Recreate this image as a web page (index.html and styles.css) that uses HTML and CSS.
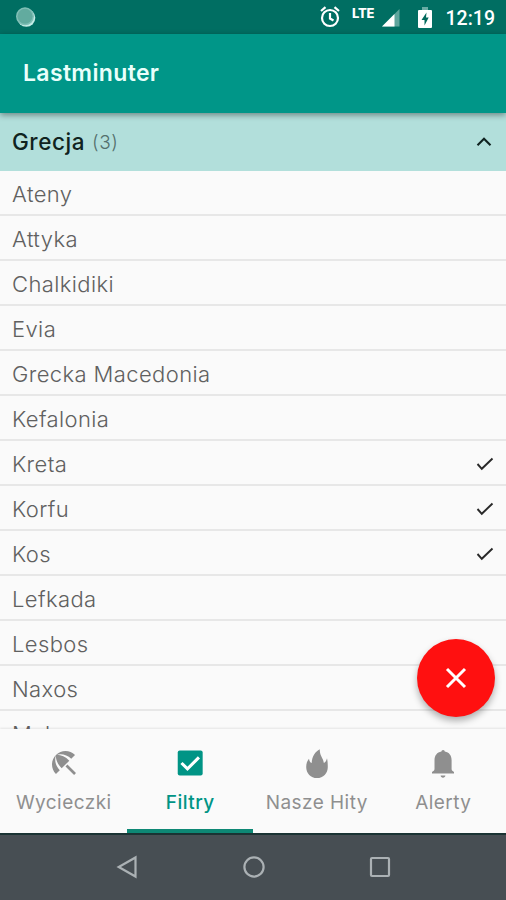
FILE: index.html
```html
<!DOCTYPE html>
<html lang="pl">
<head>
<meta charset="utf-8">
<title>Lastminuter</title>
<link rel="stylesheet" href="styles.css">
</head>
<body>
<div class="app">
  <header class="status">
    <svg class="sync" width="22" height="22" viewBox="0 0 22 22"><circle cx="11.300" cy="11.800" r="9" fill="#c3ece6"/><circle cx="10" cy="10.300" r="9" fill="#80bfb6"/><circle cx="10" cy="10.300" r="7.500" fill="#62ab9f"/></svg>
    <svg class="alarm" width="20" height="22" viewBox="0 0 20 22" fill="none" stroke="#fff" stroke-width="2.200"><circle cx="10" cy="12" r="8"/><path d="M10 7v5.500l3.500 2M1 5l4.500-3.800M19 5l-4.500-3.800"/></svg>
    <span class="lte">LTE</span>
    <svg class="signal" width="19" height="18" viewBox="0 0 19 18"><path d="M0 17.500 17.500 0v17.500z" fill="#5ea59d"/><path d="M0 17.500 12.500 5v12.500z" fill="#fff"/></svg>
    <svg class="battery" width="14" height="22" viewBox="0 0 14 22"><path d="M4 0h6v3H4z" fill="#68aca4"/><path d="M1 3h12a1 1 0 0 1 1 1v16a1 1 0 0 1-1 1H1a1 1 0 0 1-1-1V4a1 1 0 0 1 1-1z" fill="#fff"/><path d="M8.500 5.500 3.500 13h3v5.500l4.200-8H8z" fill="#00695c"/></svg>
    <span class="clock">12:19</span>
  </header>
  <div class="appbar"><h1>Lastminuter</h1></div>
  <main class="list">
    <div class="group"><span class="country">Grecja</span><span class="count">(3)</span>
      <svg class="chevron" width="16" height="10" viewBox="0 0 16 10" fill="none" stroke="#102320" stroke-width="2.100"><path d="M1.500 8.200 8 1.800l6.500 6.400"/></svg>
    </div>
    <div class="row">Ateny</div>
    <div class="row">Attyka</div>
    <div class="row">Chalkidiki</div>
    <div class="row">Evia</div>
    <div class="row">Grecka Macedonia</div>
    <div class="row">Kefalonia</div>
    <div class="row">Kreta<svg class="check" width="18" height="14" viewBox="0 0 18 14"><path d="m1.500 7 4.300 4.800L16.500 1.500"/></svg></div>
    <div class="row">Korfu<svg class="check" width="18" height="14" viewBox="0 0 18 14"><path d="m1.500 7 4.300 4.800L16.500 1.500"/></svg></div>
    <div class="row">Kos<svg class="check" width="18" height="14" viewBox="0 0 18 14"><path d="m1.500 7 4.300 4.800L16.500 1.500"/></svg></div>
    <div class="row">Lefkada</div>
    <div class="row">Lesbos</div>
    <div class="row">Naxos</div>
    <div class="row">Mykonos</div>
    <button class="fab" aria-label="Zamknij"><svg width="22" height="22" viewBox="0 0 22 22"><path d="m2 2 18 18M20 2 2 20" stroke="#fff" stroke-width="3"/></svg></button>
  </main>
  <nav class="tabs">
    <div class="tab">
      <svg width="32" height="32" viewBox="0 0 24 24" fill="#8f8f8f"><path d="m13.127 14.560 1.430-1.430 6.440 6.443L19.570 21zm4.293-5.730 2.860-2.860c-3.950-3.950-10.350-3.960-14.300-.02 3.930-1.300 8.310-.25 11.440 2.880zM5.950 5.980c-3.940 3.950-3.930 10.350.02 14.300l2.860-2.860C5.700 14.290 4.650 9.910 5.950 5.980zm.02-.02-.01.01c-.38 3.010 1.170 6.880 4.300 10.020l5.730-5.730c-3.130-3.130-7.010-4.680-10.020-4.300z"/></svg>
      <span>Wycieczki</span>
    </div>
    <div class="tab active">
      <svg width="32" height="32" viewBox="0 0 24 24"><rect x="2.800" y="2.700" width="18.700" height="18.700" rx="1.500" fill="#009485"/><path d="m5.600 12 4.500 4.400 8.600-8.600" fill="none" stroke="#fff" stroke-width="2.300"/></svg>
      <span>Filtry</span>
    </div>
    <div class="tab">
      <svg width="32" height="32" viewBox="0 0 32 32" fill="#8f8f8f"><path d="M18.800 2.200C14.300 4.400 11 9.200 10.700 16c-1.600-.6-2.400-2.300-2.700-4.300C6.100 14 5.200 16.800 5.200 19.900 5.200 26.200 9.800 31 16 31s10.800-4.800 10.800-11.100c0-3.300-.3-6.500-.8-8.600-.5 2.200-1.500 4-3.100 4.700-.5-5-4.400-7.200-4.100-13.800z"/></svg>
      <span>Nasze Hity</span>
    </div>
    <div class="tab">
      <svg width="32" height="32" viewBox="0 0 32 32" fill="#8f8f8f"><path d="M14.400 4.600a1.700 1.700 0 0 1 3.400 0c4.400.8 6.800 4 6.800 8.700v8.600c0 1.500 1 2.100 2.400 3v1.600H5v-1.600c1.500-.9 2.500-1.500 2.500-3v-8.600c0-4.700 2.500-7.900 6.900-8.700zM13.600 28.500h4.800c-.2 1.400-1 2.200-2.400 2.200s-2.200-.8-2.400-2.200z"/></svg>
      <span>Alerty</span>
    </div>
  </nav>
  <footer class="sysnav">
    <svg width="22" height="24" viewBox="0 0 22 24"><path d="M19.500 2.500v19L2.700 12z"/></svg>
    <svg width="24" height="24" viewBox="0 0 24 24"><circle cx="12" cy="12" r="9.600"/></svg>
    <svg width="22" height="22" viewBox="0 0 22 22"><rect x="2" y="2" width="18" height="18" rx="1"/></svg>
  </footer>
</div>
</body>
</html>
```
FILE: styles.css
```css
* { box-sizing: border-box; }
body { margin: 0; font-family: Inter, "Liberation Sans", sans-serif; background: #fafafa; }
svg { display: block; flex: none; }
.app { width: 506px; height: 900px; display: flex; flex-direction: column; overflow: hidden; }
.status { height: 34px; flex: none; background: #006e62; display: flex; align-items: flex-start; color: #fff; }
.sync { margin: 6px 0 0 15px; }
.alarm { margin: 6px 0 0 283px; }
.lte { margin: 7px 0 0 12px; width: 24px; font: 800 13px/13px Inter, sans-serif; letter-spacing: -.2px; white-space: nowrap; }
.signal { margin: 9px 0 0 6px; }
.battery { margin: 7px 0 0 17px; }
.clock { margin: 8px 0 0 13.500px; font: 500 19.500px/22px Roboto, sans-serif; white-space: nowrap; }
.appbar { height: 79px; flex: none; background: #009688; display: flex; align-items: center; padding: 0 0 1px 23px; box-shadow: 0 2px 6px rgba(0,0,0,.4); position: relative; z-index: 2; }
h1 { margin: 0; color: #e9fffb; font-size: 23px; line-height: 28px; font-weight: 600; letter-spacing: .35px; }
.list { flex: none; height: 616px; overflow: hidden; position: relative; background: #fafafa; }
.group { height: 58px; background: #b2dfdb; display: flex; align-items: center; padding: 0 14px 0 12px; }
.country { color: #102320; font-size: 22.500px; font-weight: 500; letter-spacing: .55px; margin-top: -2px; }
.count { color: #54706d; font-size: 19px; font-weight: 300; margin-left: 7px; letter-spacing: .6px; }
.chevron { margin-left: auto; }
.row { height: 45px; border-bottom: 2px solid #e7e7e7; padding: 2px 12px 0; display: flex; align-items: center; color: #606060; font-size: 22px; font-weight: 300; letter-spacing: .39px; }
.check { margin-left: auto; }
.check path { fill: none; stroke: #292929; stroke-width: 1.900; }
.fab { position: absolute; left: 417px; top: 526px; width: 78px; height: 78px; border: 0; border-radius: 50%; padding: 0; display: flex; align-items: center; justify-content: center; background: #ff1010; box-shadow: 0 4px 7px rgba(0,0,0,.3); }
.tabs { height: 104px; flex: none; background: #fafafa; display: grid; grid-template-columns: repeat(4, 1fr); box-shadow: 0 -1px 2px rgba(0,0,0,.09); position: relative; }
.tab { display: flex; flex-direction: column; align-items: center; padding: 18px 0 0 1px; color: #8f8f8f; font-size: 19px; line-height: 24px; letter-spacing: .45px; }
.tab span { margin-top: 12px; white-space: nowrap; }
.active { color: #009485; font-weight: 500; border-bottom: 4px solid #0e8875; }
.sysnav { height: 67px; flex: none; background: #474e53; border-top: 2px solid #1b3434; display: flex; align-items: center; justify-content: space-between; padding: 0 115px 1px 116px; }
.sysnav svg { fill: none; stroke: #abb1b4; stroke-width: 2.200; }
```
